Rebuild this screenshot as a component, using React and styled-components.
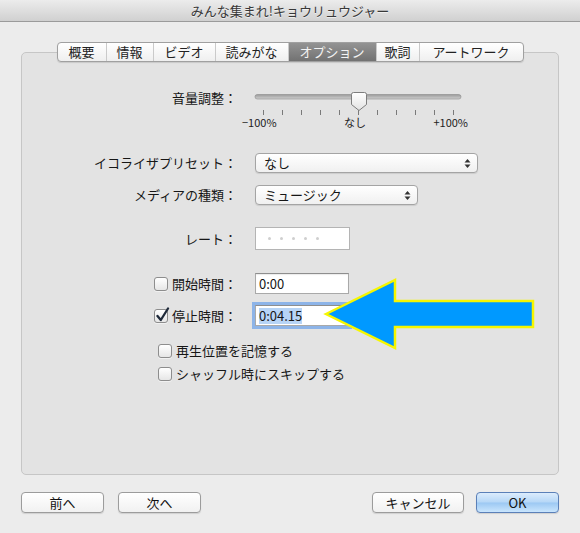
import React from 'react';
import styled, { createGlobalStyle } from 'styled-components';

const Global = createGlobalStyle`
  html, body { margin: 0; padding: 0; }
  body {
    width: 580px; height: 533px; overflow: hidden; background: #ececec;
    font-family: "Noto Sans CJK JP", "Noto Sans", sans-serif;
    font-size: 13px; color: #161616;
  }
`;

const Window = styled.div`
  width: 580px; height: 533px; display: flex; flex-direction: column;
  background: #ececec; box-sizing: border-box;
`;

const TitleBar = styled.div`
  height: 21px; flex: none; border-bottom: 1px solid #9b9b9b;
  background: linear-gradient(#ececec, #d0d0d0);
  display: flex; align-items: center; justify-content: center;
  font-size: 13px; color: #383838; text-shadow: 0 1px 0 rgba(255,255,255,.6);
`;

const Body = styled.div`
  flex: 1; display: flex; flex-direction: column; padding: 20px 21px 20px 21px;
`;

const Panel = styled.div`
  flex: 1; display: flex; flex-direction: column;
`;

const TabBar = styled.div`
  align-self: center; display: flex; height: 20px; box-sizing: border-box;
  border: 1px solid #a0a0a0; border-radius: 4px; overflow: hidden;
  background: linear-gradient(#ffffff, #efefef);
  margin-bottom: -10px; position: relative; z-index: 1;
  box-shadow: 0 1px 1px rgba(0,0,0,.12);
`;

const Tab = styled.div`
  width: ${p => p.$w}px; box-sizing: border-box; flex: none;
  display: flex; align-items: center; justify-content: center;
  font-size: 13px; line-height: 18px; white-space: nowrap;
  border-left: ${p => (p.$first ? 'none' : '1px solid #cacaca')};
  color: ${p => (p.$active ? '#f3f3f3' : '#222')};
  background: ${p => (p.$active ? 'linear-gradient(#939393, #727272)' : 'transparent')};
`;

const Box = styled.div`
  flex: 1; position: relative; box-sizing: border-box;
  border: 1px solid #c6c6c6; border-radius: 5px; background: #e3e3e3;
`;

const Form = styled.div`
  display: flex; flex-direction: column; padding-top: 35px;
`;

const Row = styled.div`
  display: grid; grid-template-columns: 215px auto; column-gap: 18px;
  align-items: ${p => p.$align || 'center'}; margin-top: ${p => p.$mt || 0}px;
`;

const Label = styled.div`
  justify-self: end; display: flex; align-items: center; gap: 4px;
  white-space: nowrap; line-height: 16px; margin-top: ${p => p.$mt || 0}px;
`;

const CheckRow = styled.div`
  display: flex; align-items: center; gap: 4px; margin-left: 136px;
  line-height: 16px; margin-top: ${p => p.$mt || 0}px;
`;

const SliderWrap = styled.div`
  width: 228px; margin-left: -13px; display: flex; flex-direction: column;
`;

const SliderLabels = styled.div`
  display: flex; justify-content: space-between; padding-right: 2px;
  font-size: 11px; line-height: 12px; color: #222;
`;

const Popup = styled.div`
  width: ${p => p.$w}px; height: 20px; box-sizing: border-box;
  border: 1px solid #a4a4a4; border-radius: 4px;
  background: linear-gradient(#ffffff, #f0f0f0);
  box-shadow: 0 1px 1px rgba(0,0,0,.1);
  display: flex; align-items: center; justify-content: space-between;
  padding: 0 6px 0 8px; line-height: 16px;
`;

const RateField = styled.div`
  width: 95px; height: 23px; box-sizing: border-box; background: #fff;
  border: 1px solid #b4b4b4; display: flex; align-items: center;
  gap: 9px; padding-left: 12px;
`;

const Dot = styled.span`
  width: 3px; height: 3px; border-radius: 50%; background: #cfcfcf;
`;

const Field = styled.div`
  width: 94px; height: 21px; box-sizing: border-box; background: #fff;
  border: 1px solid #a9a9a9; border-top-color: #8e8e8e;
  box-shadow: ${p => (p.$focus ? '0 0 0 3px #8db4e8' : 'inset 0 1px 1px rgba(0,0,0,.08)')};
  display: flex; align-items: center; padding-left: 3px; line-height: 16px;
`;

const Selected = styled.span`
  background: #b7d4f6;
`;

const CheckBox = styled.span`
  position: relative; width: 14px; height: 14px; box-sizing: border-box; flex: none;
  border: 1px solid #8d8d8d; border-radius: 3px;
  background: linear-gradient(#ffffff, #e6e6e6);
  box-shadow: 0 1px 0 rgba(255,255,255,.5);
`;

const CheckMark = styled.svg`
  position: absolute; left: 0px; top: -3px;
`;

const Arrow = styled.svg`
  position: absolute; left: 298px; top: 222px; overflow: visible;
`;

const Footer = styled.div`
  margin-top: 17px; display: flex; justify-content: space-between; flex: none;
`;

const ButtonGroup = styled.div`
  display: flex; gap: ${p => p.$gap}px;
`;

const Button = styled.button`
  width: ${p => p.$w}px; height: 21px; box-sizing: border-box; padding: 0;
  font-family: inherit; font-size: 13px; color: #111; line-height: 1;
  border-radius: 4px;
  border: 1px solid ${p => (p.$primary ? '#5b80b8' : '#9c9c9c')};
  background: ${p => (p.$primary
    ? 'linear-gradient(#dcecfc 0%, #b6d7f7 48%, #9cc8f3 52%, #c9e5fd 100%)'
    : 'linear-gradient(#ffffff, #f1f1f1)')};
  box-shadow: 0 1px 1px rgba(0,0,0,.12);
`;

function UpDown() {
  return (
    <svg width="7" height="11" viewBox="0 0 7 11">
      <path d="M3.5 1 L6.5 4.5 L0.5 4.5 Z" fill="#333" />
      <path d="M3.5 10 L6.5 6.5 L0.5 6.5 Z" fill="#333" />
    </svg>
  );
}

function Check({ checked }) {
  return (
    <CheckBox>
      {checked && (
        <CheckMark width="15" height="16" viewBox="0 0 15 16">
          <path d="M2.5 9 L5.8 13 L13 1.5" fill="none" stroke="#1f2a3a" strokeWidth="2.3" strokeLinecap="round" strokeLinejoin="round" />
        </CheckMark>
      )}
    </CheckBox>
  );
}

function Slider() {
  const ticks = Array.from({ length: 11 }, (_, i) => 21 + i * 19);
  return (
    <SliderWrap>
      <svg width="228" height="28" viewBox="0 0 228 28">
        <defs>
          <linearGradient id="trk" x1="0" y1="0" x2="0" y2="1">
            <stop offset="0" stopColor="#9a9a9a" />
            <stop offset="1" stopColor="#d0d0d0" />
          </linearGradient>
          <linearGradient id="thm" x1="0" y1="0" x2="0" y2="1">
            <stop offset="0" stopColor="#ffffff" />
            <stop offset="1" stopColor="#e2e2e2" />
          </linearGradient>
        </defs>
        <rect x="13" y="6.5" width="206" height="4.5" rx="2.25" fill="url(#trk)" stroke="#8a8a8a" strokeWidth="0.6" />
        {ticks.map(x => (
          <line key={x} x1={x + 0.5} y1="22" x2={x + 0.5} y2="27" stroke="#7a7a7a" strokeWidth="1" />
        ))}
        <path d="M109.5 6.5 Q109.5 4.5 111.5 4.5 L122.5 4.5 Q124.5 4.5 124.5 6.5 L124.5 16.5 L117 22.5 L109.5 16.5 Z" fill="url(#thm)" stroke="#7d7d7d" strokeWidth="1" />
      </svg>
      <SliderLabels>
        <span>−100%</span>
        <span>なし</span>
        <span>+100%</span>
      </SliderLabels>
    </SliderWrap>
  );
}

const tabs = [
  { label: '概要', w: 48 },
  { label: '情報', w: 47 },
  { label: 'ビデオ', w: 62 },
  { label: '読みがな', w: 73 },
  { label: 'オプション', w: 88, active: true },
  { label: '歌詞', w: 43 },
  { label: 'アートワーク', w: 104 },
];

export default function App() {
  return (
    <>
      <Global />
      <Window>
        <TitleBar>みんな集まれ!キョウリュウジャー</TitleBar>
        <Body>
          <Panel>
            <TabBar>
              {tabs.map((t, i) => (
                <Tab key={t.label} $w={t.w} $first={i === 0} $active={t.active}>{t.label}</Tab>
              ))}
            </TabBar>
            <Box>
              <Form>
                <Row $align="start">
                  <Label $mt={2}>音量調整：</Label>
                  <Slider />
                </Row>
                <Row $mt={25}>
                  <Label>イコライザプリセット：</Label>
                  <Popup $w={223}><span>なし</span><UpDown /></Popup>
                </Row>
                <Row $mt={12}>
                  <Label>メディアの種類：</Label>
                  <Popup $w={163}><span>ミュージック</span><UpDown /></Popup>
                </Row>
                <Row $mt={22}>
                  <Label>レート：</Label>
                  <RateField><Dot /><Dot /><Dot /><Dot /><Dot /></RateField>
                </Row>
                <Row $mt={23}>
                  <Label><Check />開始時間：</Label>
                  <Field>0:00</Field>
                </Row>
                <Row $mt={11}>
                  <Label><Check checked />停止時間：</Label>
                  <Field $focus><Selected>0:04.15</Selected></Field>
                </Row>
                <CheckRow $mt={17}><Check />再生位置を記憶する</CheckRow>
                <CheckRow $mt={7}><Check />シャッフル時にスキップする</CheckRow>
              </Form>
              <Arrow width="220" height="80" viewBox="0 0 220 80">
                <polygon points="6,39 75,5 75,26 213,26 213,52 75,52 75,73" fill="#0099ff" stroke="#f6f600" strokeWidth="2.5" strokeLinejoin="miter" />
              </Arrow>
            </Box>
          </Panel>
          <Footer>
            <ButtonGroup $gap={14}>
              <Button $w={83}>前へ</Button>
              <Button $w={83}>次へ</Button>
            </ButtonGroup>
            <ButtonGroup $gap={12}>
              <Button $w={92}>キャンセル</Button>
              <Button $w={83} $primary>OK</Button>
            </ButtonGroup>
          </Footer>
        </Body>
      </Window>
    </>
  );
}
